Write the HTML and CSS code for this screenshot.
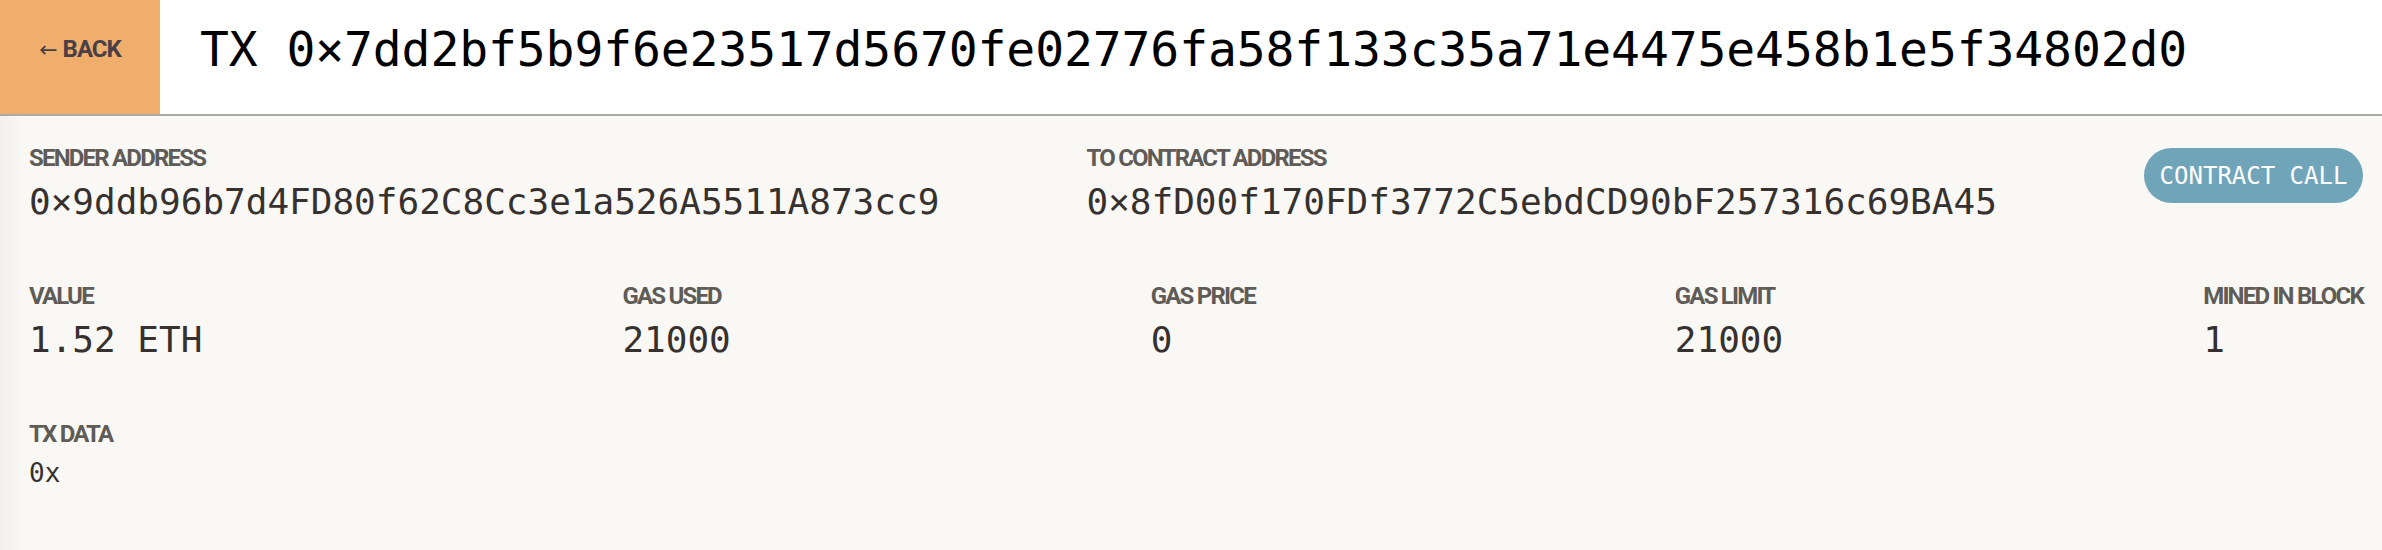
FILE: index.html
```html
<!DOCTYPE html>
<html>
<head>
<meta charset="utf-8">
<link rel="stylesheet" href="styles.css">
</head>
<body>
<header class="topbar">
  <button class="back"><span class="arrow">←</span> BACK</button>
  <h1 class="title">TX 0×7dd2bf5b9f6e23517d5670fe02776fa58f133c35a71e4475e458b1e5f34802d0</h1>
</header>
<main class="details">
  <section class="row">
    <div class="field">
      <div class="label">SENDER ADDRESS</div>
      <div class="value">0×9ddb96b7d4FD80f62C8Cc3e1a526A5511A873cc9</div>
    </div>
    <div class="field">
      <div class="label">TO CONTRACT ADDRESS</div>
      <div class="value">0×8fD00f170FDf3772C5ebdCD90bF257316c69BA45</div>
    </div>
    <div class="badge">CONTRACT CALL</div>
  </section>
  <section class="row">
    <div class="field">
      <div class="label">VALUE</div>
      <div class="value">1.52 ETH</div>
    </div>
    <div class="field">
      <div class="label">GAS USED</div>
      <div class="value">21000</div>
    </div>
    <div class="field">
      <div class="label">GAS PRICE</div>
      <div class="value">0</div>
    </div>
    <div class="field">
      <div class="label">GAS LIMIT</div>
      <div class="value">21000</div>
    </div>
    <div class="field">
      <div class="label">MINED IN BLOCK</div>
      <div class="value">1</div>
    </div>
  </section>
  <section class="row">
    <div class="field">
      <div class="label">TX DATA</div>
      <div class="value small">0x</div>
    </div>
  </section>
</main>
</body>
</html>
```
FILE: styles.css
```css
* { box-sizing: border-box; }
html, body { margin: 0; padding: 0; }
body {
  width: 2382px;
  height: 550px;
  overflow: hidden;
  background: #f9f8f5;
  background-image: linear-gradient(to right, #f1f0ed 0px, #f9f8f5 24px);
}
.topbar {
  display: flex;
  align-items: stretch;
  height: 116px;
  background: #ffffff;
  border-bottom: 2px solid #aaaaaa;
}
.back {
  width: 160px;
  border: 0;
  margin: 0;
  padding: 0 0 16px 0;
  background: #f0ae6c;
  color: #4b3f47;
  font-family: Roboto, "Liberation Sans", sans-serif;
  font-weight: 700;
  font-size: 24px;
  letter-spacing: -1px;
}
.arrow {
  font-family: "DejaVu Sans", sans-serif;
  font-weight: 400;
  font-size: 22px;
  letter-spacing: 0;
}
.title {
  margin: 0;
  padding: 0 0 16px 40px;
  display: flex;
  align-items: center;
  font-family: "DejaVu Sans Mono", "Liberation Mono", monospace;
  font-weight: 400;
  font-size: 48px;
  letter-spacing: -0.1px;
  color: #000;
}
.details {
  padding: 28px 19px 0 29px;
}
.row {
  display: flex;
  justify-content: space-between;
  align-items: flex-start;
  height: 138px;
}
.field {
  display: flex;
  flex-direction: column;
}
.label {
  font-family: Roboto, "Liberation Sans", sans-serif;
  font-weight: 700;
  font-size: 24px;
  line-height: 28px;
  letter-spacing: -1.8px;
  color: #5f5b57;
  white-space: nowrap;
}
.value {
  margin-top: 8px;
  font-family: "DejaVu Sans Mono", "Liberation Mono", monospace;
  font-size: 36px;
  line-height: 44px;
  color: #36312e;
  white-space: nowrap;
}
.value.small {
  font-size: 26px;
  line-height: 34px;
}
.badge {
  margin-top: 4px;
  height: 55px;
  width: 219px;
  border-radius: 28px;
  background: #6fa4b9;
  color: #ffffff;
  font-family: "DejaVu Sans Mono", "Liberation Mono", monospace;
  font-size: 24px;
  display: flex;
  align-items: center;
  justify-content: center;
  white-space: pre;
}
```
